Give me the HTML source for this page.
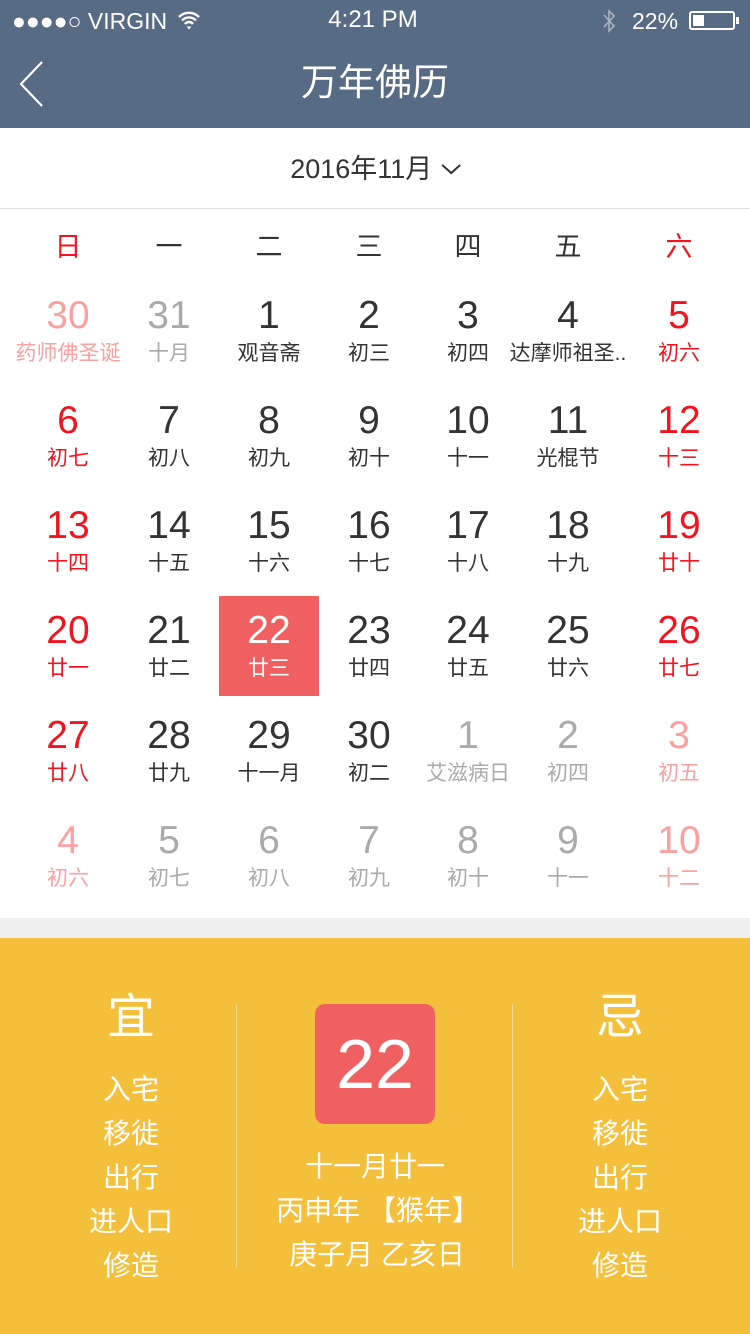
<!DOCTYPE html>
<html><head><meta charset="utf-8"><style>
*{margin:0;padding:0;box-sizing:border-box}
body{width:750px;height:1334px;overflow:hidden;background:#fff;font-family:"Liberation Sans","Noto Sans CJK SC",sans-serif;position:relative}
.a{position:absolute;white-space:nowrap;transform:translateX(-50%);text-align:center;line-height:1}
.hd{position:absolute;left:0;top:0;width:750px;height:128px;background:#586b84;color:#fff}
.n{font-size:39px}
.l{font-size:21px}
.k{color:#333}.r{color:#f0141e}.g{color:#aaa}.p{color:#fba0a0}
.y{position:absolute;left:0;top:938px;width:750px;height:396px;background:#f4bf3a;color:#fff}
.y .a{font-size:28px}
</style></head><body>
<div class="hd">
<div style="position:absolute;left:12px;top:8px;font-size:23px">●●●●○ VIRGIN</div>
<svg style="position:absolute;left:177px;top:10px" width="24" height="20" viewBox="0 0 24 20"><path d="M2 7a14 14 0 0 1 20 0M5 10.5a9.5 9.5 0 0 1 14 0M8 14a5 5 0 0 1 8 0" stroke="#fff" stroke-width="2.4" fill="none"/><path d="M9.5 16.5L12 19.5L14.5 16.5Z" fill="#fff"/></svg>
<div class="a" style="left:373px;top:8px;font-size:24px">4:21 PM</div>
<svg style="position:absolute;left:601px;top:8px" width="16" height="26" viewBox="0 0 16 26"><path d="M3 7L13 18L8 23V3L13 8L3 19" stroke="#aab3c0" stroke-width="1.6" fill="none"/></svg>
<div style="position:absolute;left:632px;top:8px;font-size:23px">22%</div>
<div style="position:absolute;left:689px;top:11px;width:46px;height:19px;border:2px solid #fff;border-radius:3px"><div style="margin:2px;width:11px;height:11px;background:#fff"></div></div>
<div style="position:absolute;left:736px;top:17px;width:3px;height:7px;background:#fff"></div>
<svg style="position:absolute;left:16px;top:60px" width="30" height="48" viewBox="0 0 30 48"><path d="M26 2L5 24L26 46" stroke="#fff" stroke-width="2.2" fill="none"/></svg>
<div class="a" style="left:375px;top:64px;font-size:37px">万年佛历</div>
</div>
<div style="position:absolute;left:0;top:128px;width:750px;height:81px;border-bottom:1px solid #ddd"></div>
<div class="a" style="left:376px;top:156px;font-size:27px;color:#333">2016年11月 <svg width="22" height="14" viewBox="0 0 22 14" style="vertical-align:2px"><path d="M2 3L11 11L20 3" stroke="#333" stroke-width="2" fill="none"/></svg></div>
<div style="position:absolute;left:219px;top:596px;width:100px;height:100px;background:#f06060"></div>
<div style="position:absolute;left:0;top:918px;width:750px;height:20px;background:#efefef"></div>
<div id="cal"></div>
<div class="y">
<div class="a" style="left:131px;top:56px;font-size:48px">宜</div>
<div class="a" style="left:620px;top:56px;font-size:48px">忌</div>
<div style="position:absolute;left:236px;top:66px;width:1px;height:264px;background:#f8d98a"></div>
<div style="position:absolute;left:512px;top:66px;width:1px;height:264px;background:#f8d98a"></div>
<div style="position:absolute;left:315px;top:66px;width:120px;height:120px;background:#f06060;border-radius:10px;font-size:70px;text-align:center;line-height:120px">22</div>
<div class="a" style="left:131px;top:138px">入宅</div><div class="a" style="left:131px;top:182px">移徙</div><div class="a" style="left:131px;top:226px">出行</div><div class="a" style="left:131px;top:270px">进人口</div><div class="a" style="left:131px;top:314px">修造</div>
<div class="a" style="left:620px;top:138px">入宅</div><div class="a" style="left:620px;top:182px">移徙</div><div class="a" style="left:620px;top:226px">出行</div><div class="a" style="left:620px;top:270px">进人口</div><div class="a" style="left:620px;top:314px">修造</div>
<div class="a" style="left:375px;top:215px">十一月廿一</div>
<div class="a" style="left:378px;top:259px">丙申年 【猴年】</div>
<div class="a" style="left:377px;top:303px">庚子月 乙亥日</div>
</div>
<script>
var X=[68,169,269,369,468,568,679];
var W=[["日","r"],["一","k"],["二","k"],["三","k"],["四","k"],["五","k"],["六","r"]];
var h="";
W.forEach(function(w,i){h+='<div class="a '+w[1]+'" style="left:'+X[i]+'px;top:234px;font-size:27px">'+w[0]+'</div>'});
var D=[
[["30","药师佛圣诞","p"],["31","十月","g"],["1","观音斋","k"],["2","初三","k"],["3","初四","k"],["4","达摩师祖圣..","k"],["5","初六","r"]],
[["6","初七","r"],["7","初八","k"],["8","初九","k"],["9","初十","k"],["10","十一","k"],["11","光棍节","k"],["12","十三","r"]],
[["13","十四","r"],["14","十五","k"],["15","十六","k"],["16","十七","k"],["17","十八","k"],["18","十九","k"],["19","廿十","r"]],
[["20","廿一","r"],["21","廿二","k"],["22","廿三","w"],["23","廿四","k"],["24","廿五","k"],["25","廿六","k"],["26","廿七","r"]],
[["27","廿八","r"],["28","廿九","k"],["29","十一月","k"],["30","初二","k"],["1","艾滋病日","g"],["2","初四","g"],["3","初五","p"]],
[["4","初六","p"],["5","初七","g"],["6","初八","g"],["7","初九","g"],["8","初十","g"],["9","十一","g"],["10","十二","p"]]];
D.forEach(function(r,j){r.forEach(function(c,i){var cl=c[2]=="w"?'':c[2];var st=c[2]=="w"?'color:#fff;':'';
h+='<div class="a n '+cl+'" style="'+st+'left:'+X[i]+'px;top:'+(296+j*105)+'px">'+c[0]+'</div>';
h+='<div class="a l '+cl+'" style="'+st+'left:'+X[i]+'px;top:'+(343+j*105)+'px">'+c[1]+'</div>';})});
document.getElementById("cal").innerHTML=h;
</script>
</body></html>
